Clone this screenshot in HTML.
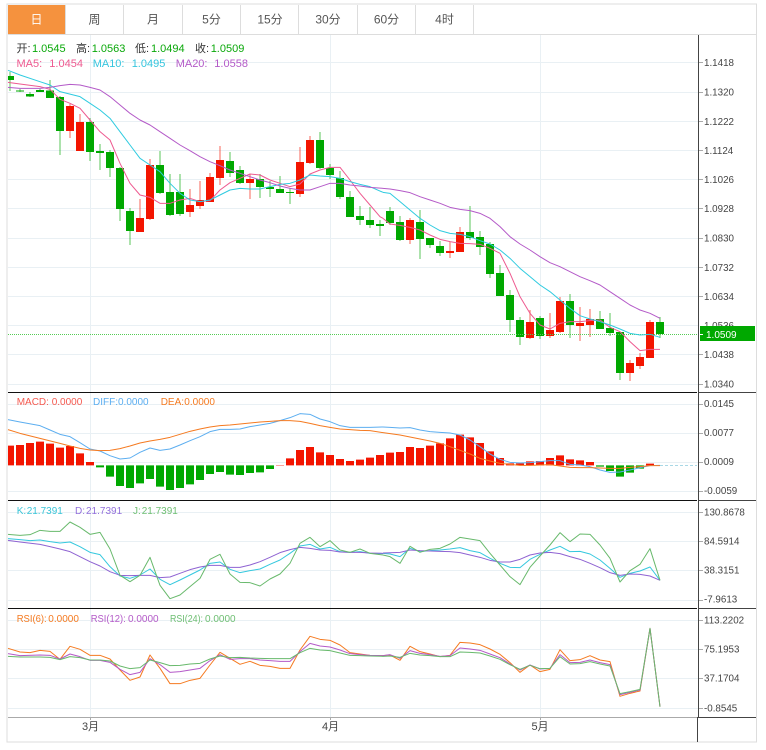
<!DOCTYPE html>
<html><head><meta charset="utf-8"><style>
html,body{margin:0;padding:0;background:#fff;width:766px;height:750px;overflow:hidden}
svg{display:block;font-family:"Liberation Sans","Noto Sans CJK SC",sans-serif}
.ax text{font-size:9.8px;fill:#444}
.tb text{font-size:12px;fill:#555;text-anchor:middle}
.lg{font-size:11px}
.lg2{font-size:10px}
polyline{fill:none;stroke-width:3;stroke-linejoin:round}
</style></head><body>
<svg width="766" height="750" viewBox="0 0 766 750" xmlns="http://www.w3.org/2000/svg">
<rect x="7" y="4" width="749.5" height="738" fill="#fff" stroke="#ddd" stroke-width="1"/>
<!-- grid -->
<path stroke="#e9f0f4" stroke-width="1" fill="none" d="M8 62.5H698M8 92.5H698M8 121.5H698M8 150.5H698M8 179.5H698M8 208.5H698M8 238.5H698M8 267.5H698M8 296.5H698M8 325.5H698M8 354.5H698M8 384.5H698M8 404.5H698M8 433.5H698M8 462.5H698M8 491.5H698M8 512.5H698M8 541.5H698M8 570.5H698M8 600.5H698M8 620.5H698M8 649.5H698M8 678.5H698M8 708.5H698M90.5 35V717M330.5 35V717M540.5 35V717"/>
<!-- tabs -->
<rect x="8" y="5" width="57" height="29" fill="#f5923e"/>
<path stroke="#ddd" stroke-width="1" fill="none" d="M8 34.5H756M65.5 5V34M123.5 5V34M182.5 5V34M240.5 5V34M298.5 5V34M357.5 5V34M415.5 5V34M473.5 5V34"/>
<g class="tb">
<text x="36.5" y="23.5" style="fill:#fff">日</text>
<text x="94.5" y="23.5">周</text>
<text x="153" y="23.5">月</text>
<text x="211.5" y="23.5">5分</text>
<text x="270" y="23.5">15分</text>
<text x="328" y="23.5">30分</text>
<text x="386.5" y="23.5">60分</text>
<text x="444.5" y="23.5">4时</text>
</g>
<!-- candle wicks -->
<path fill="none" stroke="#00a800" stroke-opacity=".5" stroke-width="1.3" d="M10 72V91M20 89V92M30 92V97M40 89V92M50 80V98M60 96V155M90 118V161M100 144V170M110 150V177M120 167V221M130 208V245M160 151V194M170 174V216M180 174V216M230 152V177M240 166V184M260 174V198M270 181V197M280 176V193M290 188V204M320 132V169M330 164V179M340 171V199M350 191V217M360 206V225M370 207V228M380 220V236M390 207V225M400 216V241M420 210V259M430 238V248M440 241V256M470 206V240M480 231V255M490 242V278M500 265V296M510 290V332M520 317V345M540 316V339M570 294V338M600 311V329M610 313V336M620 332V380M660 317V338"/>
<path fill="none" stroke="#f31500" stroke-opacity=".5" stroke-width="1.3" d="M70 104V138M80 114V151M140 199V232M150 159V220M190 189V217M200 181V209M210 173V202M220 146V185M250 174V199M300 147V197M310 136V164M410 218V244M450 242V258M460 227V252M530 310V339M550 313V338M560 297V333M580 307V341M590 309V337M630 360V381M640 353V369M650 320V358"/>
<!-- candle bodies -->
<path fill="#00a800" d="M8 76H14V80H8zM16 90.5h8V91.5h-8zM26 94h8V96.5h-8zM36 90h8V92h-8zM46 90.5h8V98h-8zM56 97h8V131h-8zM86 122h8V152h-8zM96 151h8V153h-8zM106 152h8V168h-8zM116 168h8V209h-8zM126 211h8V231h-8zM156 165h8V193h-8zM166 192h8V215h-8zM176 192h8V214h-8zM226 161h8V173h-8zM236 170h8V183h-8zM256 179h8V187h-8zM266 187h8V189h-8zM276 189h8V193h-8zM286 192h8V193h-8zM316 140h8V168h-8zM326 168h8V175h-8zM336 178h8V197h-8zM346 197h8V217h-8zM356 216h8V220h-8zM366 220h8V225h-8zM376 224h8V226h-8zM386 211h8V223h-8zM396 222h8V240h-8zM416 222h8V239h-8zM426 238h8V245h-8zM436 246h8V253h-8zM466 232h8V238h-8zM476 237h8V247h-8zM486 244h8V274h-8zM496 273h8V296h-8zM506 295h8V320h-8zM516 320h8V337h-8zM536 318h8V336h-8zM566 301h8V325h-8zM596 319h8V329h-8zM606 328h8V333h-8zM616 332h8V373h-8zM656 322h8V334h-8z"/>
<path fill="#f31500" d="M66 106h8V131h-8zM76 122h8V151h-8zM136 218h8V232h-8zM146 165h8V219h-8zM186 205h8V212h-8zM196 200h8V206h-8zM206 177h8V202h-8zM216 160h8V178h-8zM246 179h8V183h-8zM296 162h8V194h-8zM306 140h8V163h-8zM406 220h8V240h-8zM446 251h8V253h-8zM456 232h8V252h-8zM526 322h8V338h-8zM546 330h8V336h-8zM556 301h8V332h-8zM576 323h8V326h-8zM586 319h8V325h-8zM626 363h8V373h-8zM636 357h8V366h-8zM646 322h8V358h-8z"/>
<!-- last price dotted -->
<path stroke="#55cc55" stroke-width="1" stroke-dasharray="1 1" d="M8 334.5H698"/>
<!-- MA lines -->
<g transform="scale(.33333)">
<polyline stroke="#ee5a90" points="24,247 60,252 120,260 150,268 180,298 210,310 240,325 270,360 300,395 330,420 360,490 390,550 420,585 450,592 480,610 510,610 540,600 570,595 600,605 630,602 660,570 690,548 720,535 750,522 780,525 810,540 840,550 870,560 900,552 930,522 960,510 990,502 1020,502 1050,540 1080,580 1110,615 1140,650 1149,655"/>
<polyline stroke="#2fcbe0" points="24,211 60,225 120,245 150,255 180,275 240,290 270,310 300,330 330,355 360,395 390,435 420,475 450,495 480,515 510,550 540,580 570,600 600,605 630,600 660,585 690,570 720,565 750,567 780,567 810,560 840,553 870,550 900,540 930,525 960,528 990,530 1020,535 1050,545 1080,553 1110,560 1149,577"/>
<polyline stroke="#b45ac8" points="24,262 60,265 120,265 150,262 180,257 210,253 240,255 270,262 300,270 330,290 360,315 390,340 420,360 450,375 480,395 510,415 540,435 570,452 600,470 630,485 660,497 690,510 720,520 750,530 780,540 810,548 840,558 870,565 900,570 930,570 960,560 990,550 1020,550 1050,555 1080,558 1110,562 1149,565"/>
</g>
<g transform="translate(383,0) scale(.33333)">
<polyline stroke="#ee5a90" points="0,655 21,672 51,676 81,682 111,690 141,705 171,718 201,725 231,730 261,731 291,733 321,745 351,760"/>
<polyline stroke="#2fcbe0" points="0,577 21,580 51,605 81,630 111,655 141,675 171,692 201,700 231,703 261,710 291,722 321,732 351,750"/>
<polyline stroke="#b45ac8" points="0,565 21,567 51,572 81,578 111,590 141,600 171,610 201,622 231,628 261,632 291,640 321,655 351,680 381,710 411,732 441,750"/>
</g>
<g transform="translate(383,250) scale(.33333)">
<polyline stroke="#ee5a90" points="351,10 381,70 411,140 441,190 471,225 501,237 531,220 561,215 591,215 621,212 651,210 681,232 711,245 741,275 771,302 801,298 831,298"/>
<polyline stroke="#2fcbe0" points="351,0 381,25 411,55 441,80 471,105 501,125 531,150 561,175 591,197 621,207 651,215 681,225 711,237 741,250 771,255 801,253 831,262"/>
<polyline stroke="#b45ac8" points="441,0 471,20 501,38 531,50 561,65 591,80 621,92 651,105 681,125 711,145 741,165 771,180 801,190 831,205"/>
</g>
<!-- MACD bars -->
<g transform="translate(0,250) scale(1,.33333)">
<path fill="#f31500" d="M8 587h6V646H8zM16 585h8V646h-8zM26 579h8V646h-8zM36 575h8V646h-8zM46 581h8V646h-8zM56 593h8V646h-8zM66 588h8V646h-8zM76 610h8V646h-8zM86 636h8V646h-8zM276 645h8V646h-8zM286 625h8V646h-8zM296 600h8V646h-8zM306 591h8V646h-8zM316 607h8V646h-8zM326 615h8V646h-8zM336 627h8V646h-8zM346 633h8V646h-8zM356 629h8V646h-8zM366 623h8V646h-8zM376 615h8V646h-8zM386 608h8V646h-8zM396 606h8V646h-8zM406 591h8V646h-8zM416 594h8V646h-8zM426 587h8V646h-8zM436 580h8V646h-8zM446 565h8V646h-8zM456 554h8V646h-8zM466 562h8V646h-8zM476 579h8V646h-8zM486 604h8V646h-8zM496 624h8V646h-8zM506 640h8V646h-8zM516 640h8V646h-8zM526 634h8V646h-8zM536 633h8V646h-8zM546 624h8V646h-8zM556 616h8V646h-8zM566 628h8V646h-8zM576 631h8V646h-8zM586 636h8V646h-8zM646 641h8V646h-8z"/>
<path fill="#00a800" d="M96 646h8V652h-8zM106 646h8V680h-8zM116 646h8V708h-8zM126 646h8V714h-8zM136 646h8V700h-8zM146 646h8V687h-8zM156 646h8V710h-8zM166 646h8V720h-8zM176 646h8V714h-8zM186 646h8V703h-8zM196 646h8V690h-8zM206 646h8V672h-8zM216 646h8V666h-8zM226 646h8V674h-8zM236 646h8V675h-8zM246 646h8V669h-8zM256 646h8V667h-8zM266 646h8V657h-8zM596 646h8V650h-8zM606 646h8V663h-8zM616 646h8V680h-8zM626 646h8V668h-8zM636 646h8V656h-8z"/>
</g>
<path stroke="#a9d8e6" stroke-width="1" stroke-dasharray="3 2" d="M660 465.5H697"/>
<g transform="translate(0,250) scale(.33333)">
<polyline stroke="#5caef0" points="24,509 60,516 120,527 150,540 180,553 210,560 240,578 270,597 300,603 330,617 360,627 390,624 420,607 450,594 480,601 510,597 540,585 570,572 600,560 630,545 660,538 690,538 720,537 750,530 780,525 810,520 840,512 870,503 900,491 930,493 960,507 990,515 1020,527 1050,532 1080,532 1110,532 1149,531"/>
<polyline stroke="#f57a20" points="24,539 60,550 120,565 180,580 210,588 240,595 270,600 300,602 330,601 360,596 390,588 420,579 450,573 480,568 510,562 540,553 570,544 600,537 630,531 660,527 690,525 720,522 750,519 780,516 810,514 840,512 870,512 900,514 930,520 960,527 990,532 1020,537 1050,539 1080,541 1110,542 1149,548"/>
</g>
<g transform="translate(383,250) scale(.33333)">
<polyline stroke="#5caef0" points="0,531 21,532 51,534 81,533 111,540 141,545 171,547 201,549 231,555 261,570 291,590 321,612 351,628 381,637 411,639 441,638 471,635 501,632 531,632 561,643 591,645 621,650 651,660 681,667 711,666 741,660 771,653 801,647 831,646"/>
<polyline stroke="#f57a20" points="0,548 51,555 81,561 111,567 141,573 171,580 201,590 231,601 261,612 291,625 321,633 351,640 381,643 411,646 441,646 471,645 501,644 531,648 561,652 591,653 621,653 651,654 681,655 711,655 741,652 771,650 801,647 831,647"/>
</g>
<!-- KDJ + RSI -->
<g transform="translate(0,500) scale(.33333)">
<polyline stroke="#35c8de" points="24,116 60,119 90,122 120,120 150,125 180,129 210,126 240,140 270,157 300,164 330,200 360,228 390,235 420,225 450,207 480,238 510,254 540,240 570,225 600,210 630,190 660,186 690,208 720,218 750,212 780,207 810,193 840,180 870,160 900,138 930,133 960,147 990,142 1020,155 1050,157 1080,155 1110,160 1149,161"/>
<polyline stroke="#8f63d2" points="24,121 60,126 120,133 150,140 180,147 210,155 240,170 270,185 300,198 330,215 360,226 390,227 420,226 450,226 480,233 510,231 540,220 570,209 600,201 630,196 660,196 690,202 720,202 750,195 780,185 810,172 840,158 870,149 900,142 930,145 960,150 990,151 1020,156 1050,157 1080,157 1110,159 1149,160"/>
<polyline stroke="#68b96c" points="24,103 60,106 90,104 120,91 150,94 180,94 210,66 240,82 270,103 300,97 330,147 360,226 390,245 420,226 450,172 480,256 510,296 540,285 570,260 600,235 630,178 660,163 690,222 720,247 750,248 780,258 810,237 840,222 870,190 900,130 930,112 960,140 990,122 1020,150 1050,157 1080,147 1110,160 1149,165"/>
<polyline stroke="#f57a20" points="24,445 60,456 90,458 120,451 150,454 180,478 210,439 240,448 270,466 300,466 330,477 360,510 390,541 420,531 450,465 480,505 510,551 540,551 570,541 600,535 630,495 660,457 690,475 720,493 750,484 780,496 810,499 840,505 870,505 900,450 930,409 960,418 990,421 1020,435 1050,458 1080,462 1110,466 1149,467"/>
<polyline stroke="#b45ac8" points="24,461 60,467 120,465 150,466 180,477 210,462 240,470 270,481 300,481 330,487 360,508 390,524 420,517 450,476 480,494 510,517 540,515 570,510 600,505 630,482 660,464 690,478 720,476 750,476 780,480 810,482 840,484 870,484 900,455 930,430 960,438 990,441 1020,450 1050,461 1080,464 1110,466 1149,467"/>
<polyline stroke="#68b96c" points="24,469 60,471 120,471 150,472 180,479 210,470 240,473 270,480 300,480 330,483 360,498 390,506 420,503 450,480 480,488 510,497 540,496 570,492 600,490 630,477 660,468 690,473 720,472 750,474 780,475 810,476 840,476 870,476 900,458 930,445 960,450 990,452 1020,459 1050,466 1080,467 1110,468 1149,469"/>
</g>
<g transform="translate(383,500) scale(.33333)">
<polyline stroke="#35c8de" points="0,160 21,162 51,170 81,145 111,155 141,152 171,150 201,147 231,143 261,152 291,158 321,175 351,190 381,202 411,203 441,178 471,163 501,150 531,139 561,155 591,154 621,162 651,180 681,205 711,232 741,220 771,213 801,201 831,241"/>
<polyline stroke="#8f63d2" points="0,159 51,157 81,150 111,152 141,153 171,154 201,155 231,158 261,165 291,172 321,181 351,186 381,186 411,178 441,165 471,159 501,157 531,161 561,170 591,178 621,190 651,203 681,218 711,226 741,222 771,223 801,228 831,241"/>
<polyline stroke="#68b96c" points="0,165 21,170 51,190 81,139 111,157 141,148 171,145 201,132 231,112 261,117 291,122 321,160 351,195 381,230 411,254 441,202 471,168 501,135 531,98 561,125 591,102 621,103 651,135 681,175 711,246 741,212 771,193 801,146 831,241"/>
<polyline stroke="#f57a20" points="0,467 21,465 51,481 81,439 111,455 141,462 171,470 201,466 231,427 261,429 291,434 321,447 351,463 381,488 411,517 441,495 471,515 501,508 531,449 561,482 591,479 621,467 651,480 681,485 711,589 741,580 771,573 801,385 831,620"/>
<polyline stroke="#b45ac8" points="0,467 21,464 51,475 81,452 111,460 141,464 171,469 201,467 231,444 261,447 291,451 321,462 351,473 381,492 411,510 441,495 471,507 501,505 531,464 561,488 591,487 621,480 651,488 681,494 711,584 741,577 771,570 801,385 831,620"/>
<polyline stroke="#68b96c" points="0,469 21,468 51,472 81,460 111,465 141,467 171,470 201,470 231,456 261,457 291,459 321,468 351,478 381,494 411,508 441,496 471,506 501,505 531,470 561,492 591,491 621,485 651,492 681,498 711,581 741,575 771,568 801,385 831,620"/>
</g>
<!-- frame lines -->
<path stroke="#111" stroke-width="1" fill="none" d="M8 392.5H697M8 500.5H697M8 608.5H697"/>
<path stroke="#444" stroke-width="1" fill="none" d="M698.5 35V717M698 392.5H756M698 500.5H756M698 608.5H756M698 717.5H756M697.5 717V742"/>
<path stroke="#aaa" stroke-width="1" fill="none" d="M8 717.5H697M90.5 717V720M330.5 717V720M540.5 717V720"/>
<path stroke="#aaa" stroke-width="1" fill="none" d="M699 62.5h4M699 92.5h4M699 121.5h4M699 150.5h4M699 179.5h4M699 208.5h4M699 238.5h4M699 267.5h4M699 296.5h4M699 354.5h4M699 384.5h4M699 404.5h4M699 433.5h4M699 462.5h4M699 491.5h4M699 512.5h4M699 541.5h4M699 570.5h4M699 600.5h4M699 620.5h4M699 649.5h4M699 678.5h4M699 708.5h4"/>
<!-- axis labels -->
<g class="ax">
<text x="704" y="66">1.1418</text><text x="704" y="95.5">1.1320</text><text x="704" y="125">1.1222</text><text x="704" y="154">1.1124</text><text x="704" y="183">1.1026</text><text x="704" y="212">1.0928</text><text x="704" y="241.5">1.0830</text><text x="704" y="271">1.0732</text><text x="704" y="300">1.0634</text><text x="704" y="329">1.0536</text><text x="704" y="358">1.0438</text><text x="704" y="387.5">1.0340</text>
<text x="704" y="407">0.0145</text><text x="704" y="436">0.0077</text><text x="704" y="465">0.0009</text><text x="704" y="494">-0.0059</text>
<text x="704" y="515.5">130.8678</text><text x="704" y="544.5">84.5914</text><text x="704" y="573.5">38.3151</text><text x="704" y="602.5">-7.9613</text>
<text x="704" y="623.5">113.2202</text><text x="704" y="652.5">75.1953</text><text x="704" y="681.5">37.1704</text><text x="704" y="711.5">-0.8545</text>
</g>
<rect x="700" y="326" width="55" height="15" fill="#00a800"/>
<path stroke="#fff" stroke-width="1" d="M700 334.5h3"/>
<text x="706" y="338" font-size="10" fill="#fff">1.0509</text>
<g font-size="11" fill="#444" text-anchor="middle">
<text x="90.5" y="730">3月</text><text x="330.5" y="730">4月</text><text x="540" y="730">5月</text>
</g>
<!-- legends -->
<g class="lg">
<text x="16.5" y="52" fill="#333">开:</text><text x="32" y="52" fill="#0aa80a">1.0545</text>
<text x="76" y="52" fill="#333">高:</text><text x="91.7" y="52" fill="#0aa80a">1.0563</text>
<text x="135" y="52" fill="#333">低:</text><text x="151" y="52" fill="#0aa80a">1.0494</text>
<text x="195" y="52" fill="#333">收:</text><text x="210.7" y="52" fill="#0aa80a">1.0509</text>
<text x="16.5" y="67" fill="#ee5a90">MA5:</text><text x="49.3" y="67" fill="#ee5a90">1.0454</text>
<text x="92.7" y="67" fill="#35c5de">MA10:</text><text x="131.7" y="67" fill="#35c5de">1.0495</text>
<text x="175.7" y="67" fill="#b45ac8">MA20:</text><text x="214.3" y="67" fill="#b45ac8">1.0558</text>
</g>
<g class="lg2">
<text x="16.7" y="405" fill="#f55a50">MACD:</text><text x="51.7" y="405" fill="#f55a50">0.0000</text>
<text x="93" y="405" fill="#5caef0">DIFF:</text><text x="118" y="405" fill="#5caef0">0.0000</text>
<text x="160.7" y="405" fill="#f57a20">DEA:</text><text x="184.3" y="405" fill="#f57a20">0.0000</text>
<text x="16.7" y="514" fill="#39c5d8">K:</text><text x="26.7" y="514" fill="#39c5d8">21.7391</text>
<text x="75" y="514" fill="#9370db">D:</text><text x="86" y="514" fill="#9370db">21.7391</text>
<text x="133" y="514" fill="#6fbf73">J:</text><text x="141.7" y="514" fill="#6fbf73">21.7391</text>
<text x="16.7" y="622" fill="#f57a20" textLength="30" lengthAdjust="spacingAndGlyphs">RSI(6):</text><text x="48.3" y="622" fill="#f57a20">0.0000</text>
<text x="90.7" y="622" fill="#b45ac8" textLength="35" lengthAdjust="spacingAndGlyphs">RSI(12):</text><text x="128" y="622" fill="#b45ac8">0.0000</text>
<text x="170" y="622" fill="#6fbf73" textLength="33" lengthAdjust="spacingAndGlyphs">RSI(24):</text><text x="205" y="622" fill="#6fbf73">0.0000</text>
</g>
</svg>
</body></html>
